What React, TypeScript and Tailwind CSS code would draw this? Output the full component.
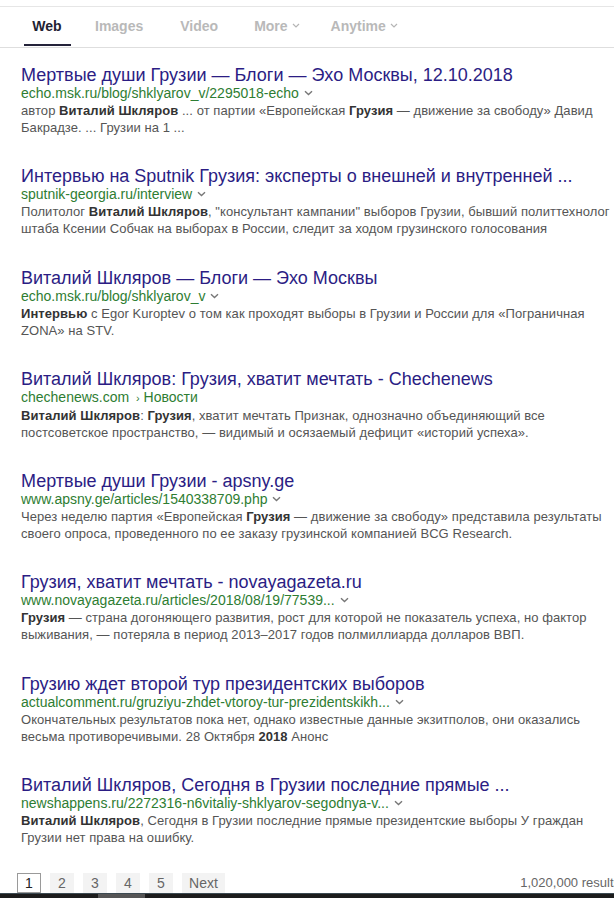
import React from "react";

type Seg = string | { b: string };
type Result = {
  title: string;
  url: React.ReactNode;
  chevron: boolean;
  lines: Seg[][];
};

const Chevron = () => (
  <svg width="9" height="6" viewBox="0 0 9 6" className="inline-block ml-[5px] mb-[1px]">
    <path d="M1 1.2 L4.5 4.5 L8 1.2" fill="none" stroke="#777" strokeWidth="1.4" />
  </svg>
);

const results: Result[] = [
  {
    title: "Мертвые души Грузии — Блоги — Эхо Москвы, 12.10.2018",
    url: "echo.msk.ru/blog/shklyarov_v/2295018-echo",
    chevron: true,
    lines: [
      ["автор ", { b: "Виталий Шкляров" }, " ... от партии «Европейская ", { b: "Грузия" }, " — движение за свободу» Давид"],
      ["Бакрадзе. ... Грузии на 1 ..."],
    ],
  },
  {
    title: "Интервью на Sputnik Грузия: эксперты о внешней и внутренней ...",
    url: "sputnik-georgia.ru/interview",
    chevron: true,
    lines: [
      ["Политолог ", { b: "Виталий Шкляров" }, ", \"консультант кампании\" выборов Грузии, бывший политтехнолог"],
      ["штаба Ксении Собчак на выборах в России, следит за ходом грузинского голосования"],
    ],
  },
  {
    title: "Виталий Шкляров — Блоги — Эхо Москвы",
    url: "echo.msk.ru/blog/shklyarov_v",
    chevron: true,
    lines: [
      [{ b: "Интервью" }, " с Egor Kuroptev о том как проходят выборы в Грузии и России для «Пограничная"],
      ["ZONA» на STV."],
    ],
  },
  {
    title: "Виталий Шкляров: Грузия, хватит мечтать - Chechenews",
    url: (
      <>
        chechenews.com <span className="ml-[3px] text-[11px]">›</span> Новости
      </>
    ),
    chevron: false,
    lines: [
      [{ b: "Виталий Шкляров" }, ": ", { b: "Грузия" }, ", хватит мечтать Признак, однозначно объединяющий все"],
      ["постсоветское пространство, — видимый и осязаемый дефицит «историй успеха»."],
    ],
  },
  {
    title: "Мертвые души Грузии - apsny.ge",
    url: "www.apsny.ge/articles/1540338709.php",
    chevron: true,
    lines: [
      ["Через неделю партия «Европейская ", { b: "Грузия" }, " — движение за свободу» представила результаты"],
      ["своего опроса, проведенного по ее заказу грузинской компанией BCG Research."],
    ],
  },
  {
    title: "Грузия, хватит мечтать - novayagazeta.ru",
    url: "www.novayagazeta.ru/articles/2018/08/19/77539...",
    chevron: true,
    lines: [
      [{ b: "Грузия" }, " — страна догоняющего развития, рост для которой не показатель успеха, но фактор"],
      ["выживания, — потеряла в период 2013–2017 годов полмиллиарда долларов ВВП."],
    ],
  },
  {
    title: "Грузию ждет второй тур президентских выборов",
    url: "actualcomment.ru/gruziyu-zhdet-vtoroy-tur-prezidentskikh...",
    chevron: true,
    lines: [
      ["Окончательных результатов пока нет, однако известные данные экзитполов, они оказались"],
      ["весьма противоречивыми. 28 Октября ", { b: "2018" }, " Анонс"],
    ],
  },
  {
    title: "Виталий Шкляров, Сегодня в Грузии последние прямые ...",
    url: "newshappens.ru/2272316-n6vitaliy-shklyarov-segodnya-v...",
    chevron: true,
    lines: [
      [{ b: "Виталий Шкляров" }, ", Сегодня в Грузии последние прямые президентские выборы У граждан"],
      ["Грузии нет права на ошибку."],
    ],
  },
];

const TabChevron = () => (
  <svg width="8" height="5" viewBox="0 0 8 5" className="inline-block ml-[4px] mb-[2px]">
    <path d="M1 1 L4 4 L7 1" fill="none" stroke="#b5b5b5" strokeWidth="1.2" />
  </svg>
);

export default function App() {
  return (
    <div
      className="w-[614px] h-[898px] bg-white overflow-hidden relative flex flex-col"
      style={{ fontFamily: '"Liberation Sans", Arial, sans-serif' }}
    >
      {/* header */}
      <div className="mt-[6px] border-t border-[#e6e6e6]" />
      <div className="h-[41px] border-b border-[#dedede] flex items-end pl-[24px] text-[14px] font-bold">
        <div className="w-[46px] h-full flex flex-col items-center justify-end">
          <span className="text-[#222233] leading-[16px] mb-[10px]">Web</span>
          <div className="w-[47px] h-[2px] bg-[#24233a] mb-[1px]" />
        </div>
        <span className="text-[#b9b9b9] leading-[16px] mb-[13px] ml-[25px]">Images</span>
        <span className="text-[#b9b9b9] leading-[16px] mb-[13px] ml-[37px]">Video</span>
        <span className="text-[#b9b9b9] leading-[16px] mb-[13px] ml-[36px] flex items-center">
          More
          <TabChevron />
        </span>
        <span className="text-[#b9b9b9] leading-[16px] mb-[13px] ml-[31px] flex items-center">
          Anytime
          <TabChevron />
        </span>
      </div>

      {/* results */}
      <div className="pl-[21px] pt-[17px] flex flex-col gap-[30.3px]">
        {results.map((r, i) => (
          <div key={i} className="flex flex-col">
            <div className="text-[18px] leading-[20px] text-[#2b1d84] whitespace-nowrap">{r.title}</div>
            <div className="text-[14px] leading-[17px] text-[#2e7d32] whitespace-nowrap flex items-center">
              <span>{r.url}</span>
              {r.chevron && <Chevron />}
            </div>
            <div className="text-[13px] leading-[17px] text-[#555555] tracking-[0.06px]">
              {r.lines.map((line, li) => (
                <div key={li} className="whitespace-nowrap">
                  {line.map((s, si) =>
                    typeof s === "string" ? (
                      <span key={si}>{s}</span>
                    ) : (
                      <b key={si} className="text-[#333333] font-bold">
                        {s.b}
                      </b>
                    )
                  )}
                </div>
              ))}
            </div>
          </div>
        ))}
      </div>

      {/* pagination */}
      <div className="mt-auto h-[20px] flex items-center pl-[17px] text-[14px] text-[#666666]">
        <div className="flex items-center gap-[9px]">
          <span className="w-[24px] h-[20px] border border-[#9a9a9a] flex items-center justify-center text-[#222]">1</span>
          {["2", "3", "4", "5"].map((n) => (
            <span key={n} className="w-[24px] h-[20px] bg-[#f3f3f3] flex items-center justify-center">
              {n}
            </span>
          ))}
          <span className="w-[43px] h-[20px] bg-[#f3f3f3] flex items-center justify-center">Next</span>
        </div>
        <span className="ml-auto text-[13px] whitespace-nowrap mr-[-6px]">1,020,000 results</span>
      </div>
      <div className="h-[5px] bg-[#1c1c1c] border-t border-[#3c4a52] flex">
        <div className="ml-[98px] w-[47px] bg-[#555555]" />
      </div>
    </div>
  );
}
